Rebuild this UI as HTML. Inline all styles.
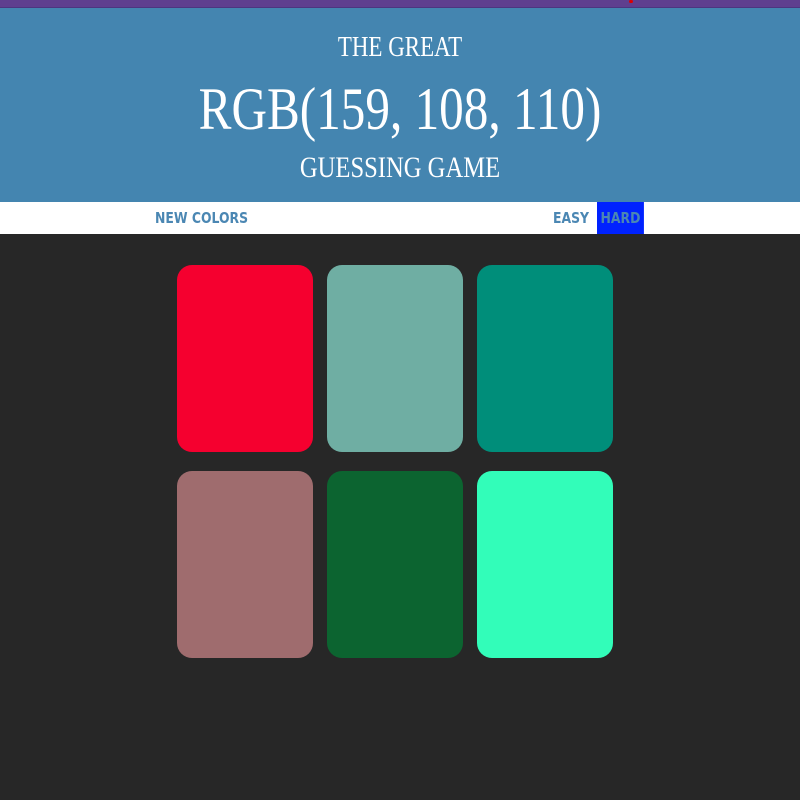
<!DOCTYPE html>
<html><head><style>
body{margin:0;width:800px;height:800px;background:#272727;overflow:hidden;font-family:"Liberation Serif",serif}
.top{height:7px;background:#5f3f8f;border-bottom:1px solid #4d3580;position:relative}
.top i{position:absolute;left:629px;top:0;width:4px;height:3px;background:#d00;border-radius:2px}
h1{margin:0;background:#4485b0;color:#fff;text-align:center;font-weight:normal;height:194px;position:relative}
h1 span{position:absolute;left:0;right:0;display:block;transform:scaleX(0.82)}
.nav{height:32px;background:#fff;position:relative;font-family:"DejaVu Sans Condensed","Liberation Sans",sans-serif;font-weight:bold;font-size:15px;color:#4b87b3}
.nav span{position:absolute;top:0;line-height:32px;transform-origin:left;transform:scaleX(0.92)}
.sq{position:absolute;width:136px;height:187px;border-radius:15px}
</style></head><body>
<div class="top"><i></i></div>
<h1>
<span style="top:24px;font-size:28px">THE GREAT</span>
<span style="top:66px;font-size:60px;line-height:70px">RGB(159, 108, 110)</span>
<span style="top:143px;font-size:30px">GUESSING GAME</span>
</h1>
<div class="nav">
<span style="left:155px">NEW COLORS</span>
<span style="left:553px">EASY</span>
<span style="left:597px;width:51px;background:#0022ff;text-align:center">HARD</span>
</div>
<div class="sq" style="left:177px;top:265px;background:#f5002f"></div>
<div class="sq" style="left:327px;top:265px;background:#6faea3"></div>
<div class="sq" style="left:477px;top:265px;background:#008e7a"></div>
<div class="sq" style="left:177px;top:471px;background:#9f6c6e"></div>
<div class="sq" style="left:327px;top:471px;background:#0c6430"></div>
<div class="sq" style="left:477px;top:471px;background:#32fdb9"></div>
</body></html>
